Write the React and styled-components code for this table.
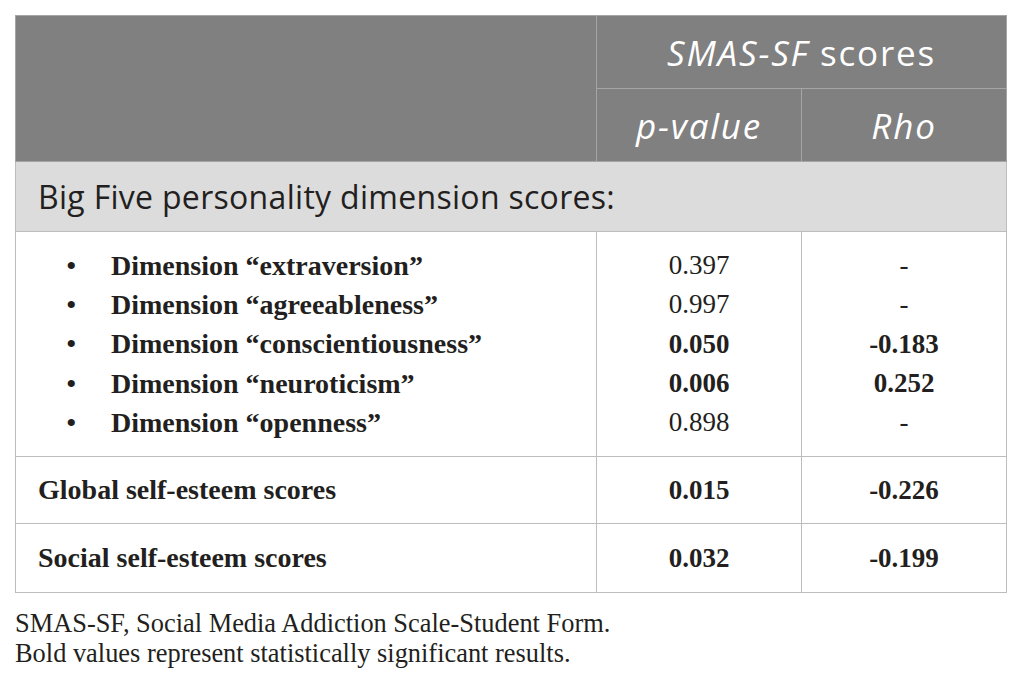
import React from 'react';
import styled, { createGlobalStyle } from 'styled-components';

const GlobalStyle = createGlobalStyle`
  body {
    margin: 0;
    background: #ffffff;
  }
`;

const dimensions = [
  { name: 'extraversion', p: '0.397', rho: '-', bold: false },
  { name: 'agreeableness', p: '0.997', rho: '-', bold: false },
  { name: 'conscientiousness', p: '0.050', rho: '-0.183', bold: true },
  { name: 'neuroticism', p: '0.006', rho: '0.252', bold: true },
  { name: 'openness', p: '0.898', rho: '-', bold: false },
];

const scores = [
  { name: 'Global self-esteem scores', p: '0.015', rho: '-0.226' },
  { name: 'Social self-esteem scores', p: '0.032', rho: '-0.199' },
];

function App() {
  return (
    <Page>
      <GlobalStyle />
      <Table>
        <colgroup>
          <col style={{ width: 581 }} />
          <col style={{ width: 205 }} />
          <col style={{ width: 205 }} />
        </colgroup>
        <thead>
          <HeadRow>
            <HeadCell rowSpan={2} />
            <HeadCell colSpan={2}>
              <em>SMAS-SF</em> scores
            </HeadCell>
          </HeadRow>
          <HeadRow>
            <HeadCell>
              <em>p-value</em>
            </HeadCell>
            <HeadCell>
              <em>Rho</em>
            </HeadCell>
          </HeadRow>
        </thead>
        <tbody>
          <SectionRow>
            <SectionCell colSpan={3}>Big Five personality dimension scores:</SectionCell>
          </SectionRow>
          <tr>
            <ListCell>
              {dimensions.map((d) => (
                <ListItem key={d.name}>
                  <Bullet>•</Bullet>
                  Dimension “{d.name}”
                </ListItem>
              ))}
            </ListCell>
            <ListCell $center>
              {dimensions.map((d) => (
                <Value key={d.name} $bold={d.bold}>{d.p}</Value>
              ))}
            </ListCell>
            <ListCell $center>
              {dimensions.map((d) => (
                <Value key={d.name} $bold={d.bold}>{d.rho}</Value>
              ))}
            </ListCell>
          </tr>
          {scores.map((s, i) => (
            <ScoreRow key={s.name} $tall={i === 1}>
              <LabelCell>{s.name}</LabelCell>
              <NumCell>{s.p}</NumCell>
              <NumCell>{s.rho}</NumCell>
            </ScoreRow>
          ))}
        </tbody>
      </Table>
      <Footnote>
        <div>SMAS-SF, Social Media Addiction Scale-Student Form.</div>
        <div>Bold values represent statistically significant results.</div>
      </Footnote>
    </Page>
  );
}

export default App;

const Page = styled.div`
  padding: 15px 0 0 15px;
  width: 992px;
`;

const Table = styled.table`
  width: 992px;
  border-collapse: collapse;
  table-layout: fixed;
  border: 1px solid #bdbdbd;
`;

const HeadRow = styled.tr`
  height: 73px;
  background: #7f807f;
`;

const HeadCell = styled.th`
  border: 1px solid #a4a5a4;
  color: #ffffff;
  font-family: 'Open Sans', Lato, sans-serif;
  font-weight: 400;
  font-size: 35px;
  letter-spacing: 1.8px;
  text-align: center;
  padding: 0;

  em {
    font-style: italic;
  }
`;

const SectionRow = styled.tr`
  height: 70px;
  background: #dcdcdc;
`;

const SectionCell = styled.td`
  border: 1px solid #bdbdbd;
  padding: 0 0 0 22px;
  font-family: 'Open Sans', Lato, sans-serif;
  font-size: 32px;
  letter-spacing: 0.3px;
  color: #231f20;
`;

const ListCell = styled.td`
  border: 1px solid #bdbdbd;
  padding: 14px 0 14px 0;
  vertical-align: top;
  text-align: ${(p) => (p.$center ? 'center' : 'left')};
  font-family: 'Liberation Serif', 'Times New Roman', serif;
  font-size: 28px;
  color: #231f20;
`;

const ListItem = styled.div`
  display: flex;
  align-items: center;
  height: 39.3px;
  font-weight: 700;
`;

const Bullet = styled.span`
  width: 95px;
  padding-left: 50px;
  box-sizing: border-box;
  font-weight: 400;
  font-size: 30px;
`;

const Value = styled.div`
  height: 39.3px;
  line-height: 39.3px;
  font-size: 27px;
  font-weight: ${(p) => (p.$bold ? 700 : 400)};
`;

const ScoreRow = styled.tr`
  height: ${(p) => (p.$tall ? '69px' : '67px')};
`;

const LabelCell = styled.td`
  border: 1px solid #bdbdbd;
  padding: 0 0 0 22px;
  font-family: 'Liberation Serif', 'Times New Roman', serif;
  font-size: 28px;
  font-weight: 700;
  color: #231f20;
`;

const NumCell = styled.td`
  border: 1px solid #bdbdbd;
  text-align: center;
  font-family: 'Liberation Serif', 'Times New Roman', serif;
  font-size: 27px;
  font-weight: 700;
  color: #231f20;
`;

const Footnote = styled.div`
  margin-top: 15px;
  font-family: 'Liberation Serif', 'Times New Roman', serif;
  font-size: 26.4px;
  line-height: 30px;
  color: #231f20;
`;
